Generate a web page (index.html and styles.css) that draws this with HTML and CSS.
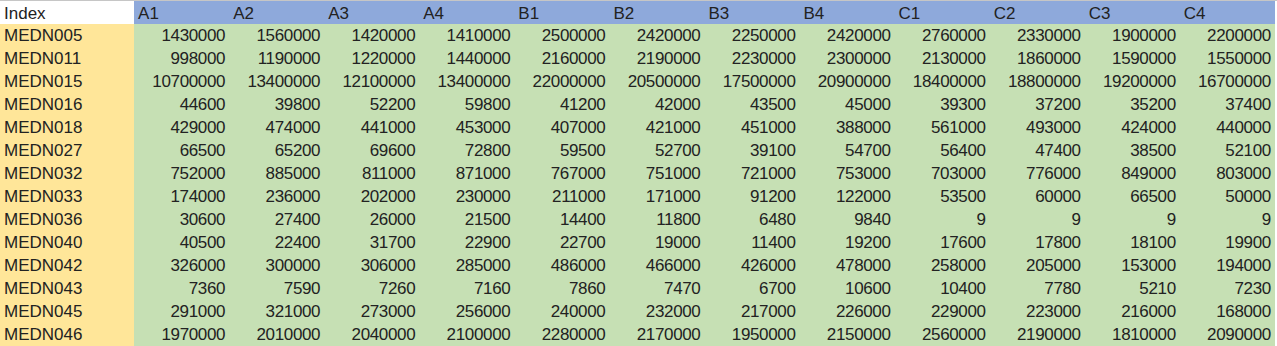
FILE: index.html
```html
<!DOCTYPE html>
<html lang="zh">
<head>
<meta charset="utf-8">
<title>Sheet</title>
<link rel="stylesheet" href="styles.css">
</head>
<body>
<table class="sheet">
  <colgroup>
    <col class="c-index">
    <col class="c-data"><col class="c-data"><col class="c-data"><col class="c-data">
    <col class="c-data"><col class="c-data"><col class="c-data"><col class="c-data">
    <col class="c-data"><col class="c-data"><col class="c-data"><col class="c-data">
    <col class="c-rest">
  </colgroup>
  <thead>
    <tr class="head">
      <th class="idx-head">Index</th>
      <th>A1</th><th>A2</th><th>A3</th><th>A4</th>
      <th>B1</th><th>B2</th><th>B3</th><th>B4</th>
      <th>C1</th><th>C2</th><th>C3</th><th>C4</th>
      <th class="rest"></th>
    </tr>
  </thead>
  <tbody>
    <tr><th>MEDN005</th><td>1430000</td><td>1560000</td><td>1420000</td><td>1410000</td><td>2500000</td><td>2420000</td><td>2250000</td><td>2420000</td><td>2760000</td><td>2330000</td><td>1900000</td><td>2200000</td><td class="rest"></td></tr>
    <tr><th>MEDN011</th><td>998000</td><td>1190000</td><td>1220000</td><td>1440000</td><td>2160000</td><td>2190000</td><td>2230000</td><td>2300000</td><td>2130000</td><td>1860000</td><td>1590000</td><td>1550000</td><td class="rest"></td></tr>
    <tr><th>MEDN015</th><td>10700000</td><td>13400000</td><td>12100000</td><td>13400000</td><td>22000000</td><td>20500000</td><td>17500000</td><td>20900000</td><td>18400000</td><td>18800000</td><td>19200000</td><td>16700000</td><td class="rest"></td></tr>
    <tr><th>MEDN016</th><td>44600</td><td>39800</td><td>52200</td><td>59800</td><td>41200</td><td>42000</td><td>43500</td><td>45000</td><td>39300</td><td>37200</td><td>35200</td><td>37400</td><td class="rest"></td></tr>
    <tr><th>MEDN018</th><td>429000</td><td>474000</td><td>441000</td><td>453000</td><td>407000</td><td>421000</td><td>451000</td><td>388000</td><td>561000</td><td>493000</td><td>424000</td><td>440000</td><td class="rest"></td></tr>
    <tr><th>MEDN027</th><td>66500</td><td>65200</td><td>69600</td><td>72800</td><td>59500</td><td>52700</td><td>39100</td><td>54700</td><td>56400</td><td>47400</td><td>38500</td><td>52100</td><td class="rest"></td></tr>
    <tr><th>MEDN032</th><td>752000</td><td>885000</td><td>811000</td><td>871000</td><td>767000</td><td>751000</td><td>721000</td><td>753000</td><td>703000</td><td>776000</td><td>849000</td><td>803000</td><td class="rest"></td></tr>
    <tr><th>MEDN033</th><td>174000</td><td>236000</td><td>202000</td><td>230000</td><td>211000</td><td>171000</td><td>91200</td><td>122000</td><td>53500</td><td>60000</td><td>66500</td><td>50000</td><td class="rest"></td></tr>
    <tr><th>MEDN036</th><td>30600</td><td>27400</td><td>26000</td><td>21500</td><td>14400</td><td>11800</td><td>6480</td><td>9840</td><td>9</td><td>9</td><td>9</td><td>9</td><td class="rest"></td></tr>
    <tr><th>MEDN040</th><td>40500</td><td>22400</td><td>31700</td><td>22900</td><td>22700</td><td>19000</td><td>11400</td><td>19200</td><td>17600</td><td>17800</td><td>18100</td><td>19900</td><td class="rest"></td></tr>
    <tr><th>MEDN042</th><td>326000</td><td>300000</td><td>306000</td><td>285000</td><td>486000</td><td>466000</td><td>426000</td><td>478000</td><td>258000</td><td>205000</td><td>153000</td><td>194000</td><td class="rest"></td></tr>
    <tr><th>MEDN043</th><td>7360</td><td>7590</td><td>7260</td><td>7160</td><td>7860</td><td>7470</td><td>6700</td><td>10600</td><td>10400</td><td>7780</td><td>5210</td><td>7230</td><td class="rest"></td></tr>
    <tr><th>MEDN045</th><td>291000</td><td>321000</td><td>273000</td><td>256000</td><td>240000</td><td>232000</td><td>217000</td><td>226000</td><td>229000</td><td>223000</td><td>216000</td><td>168000</td><td class="rest"></td></tr>
    <tr><th>MEDN046</th><td>1970000</td><td>2010000</td><td>2040000</td><td>2100000</td><td>2280000</td><td>2170000</td><td>1950000</td><td>2150000</td><td>2560000</td><td>2190000</td><td>1810000</td><td>2090000</td><td class="rest"></td></tr>
  </tbody>
</table>
</body>
</html>
```

FILE: styles.css
```css
html, body {
  margin: 0;
  padding: 0;
  background: #ffffff;
}

.sheet {
  border-collapse: collapse;
  border-spacing: 0;
  table-layout: fixed;
  width: 1277px;
  font-family: "Liberation Sans", "Noto Sans CJK SC", sans-serif;
  font-size: 17px;
  color: #222222;
  border-top: 1px solid #c6c6c6;
}

.c-index { width: 134px; }
.c-data { width: 95px; }
.c-rest { width: 2px; }

.sheet th,
.sheet td {
  padding: 0;
  border: 0;
  height: 23px;
  line-height: 23px;
  white-space: nowrap;
  overflow: hidden;
  font-weight: normal;
}

.head th {
  height: 23px;
  line-height: 21px;
  padding-top: 2px;
  background: #8ea9db;
  text-align: left;
  padding-left: 4px;
  box-sizing: border-box;
}

.head th.idx-head {
  background: #ffffff;
  padding-left: 4px;
}

.sheet tbody th {
  background: #ffe699;
  text-align: left;
  padding-left: 4px;
}

.sheet tbody td {
  background: #c6e0b4;
  text-align: right;
  padding-right: 4px;
  letter-spacing: -0.35px;
}

.sheet .rest,
.head th.rest,
.sheet tbody td.rest {
  background: #ffffff;
  padding: 0;
}
```
